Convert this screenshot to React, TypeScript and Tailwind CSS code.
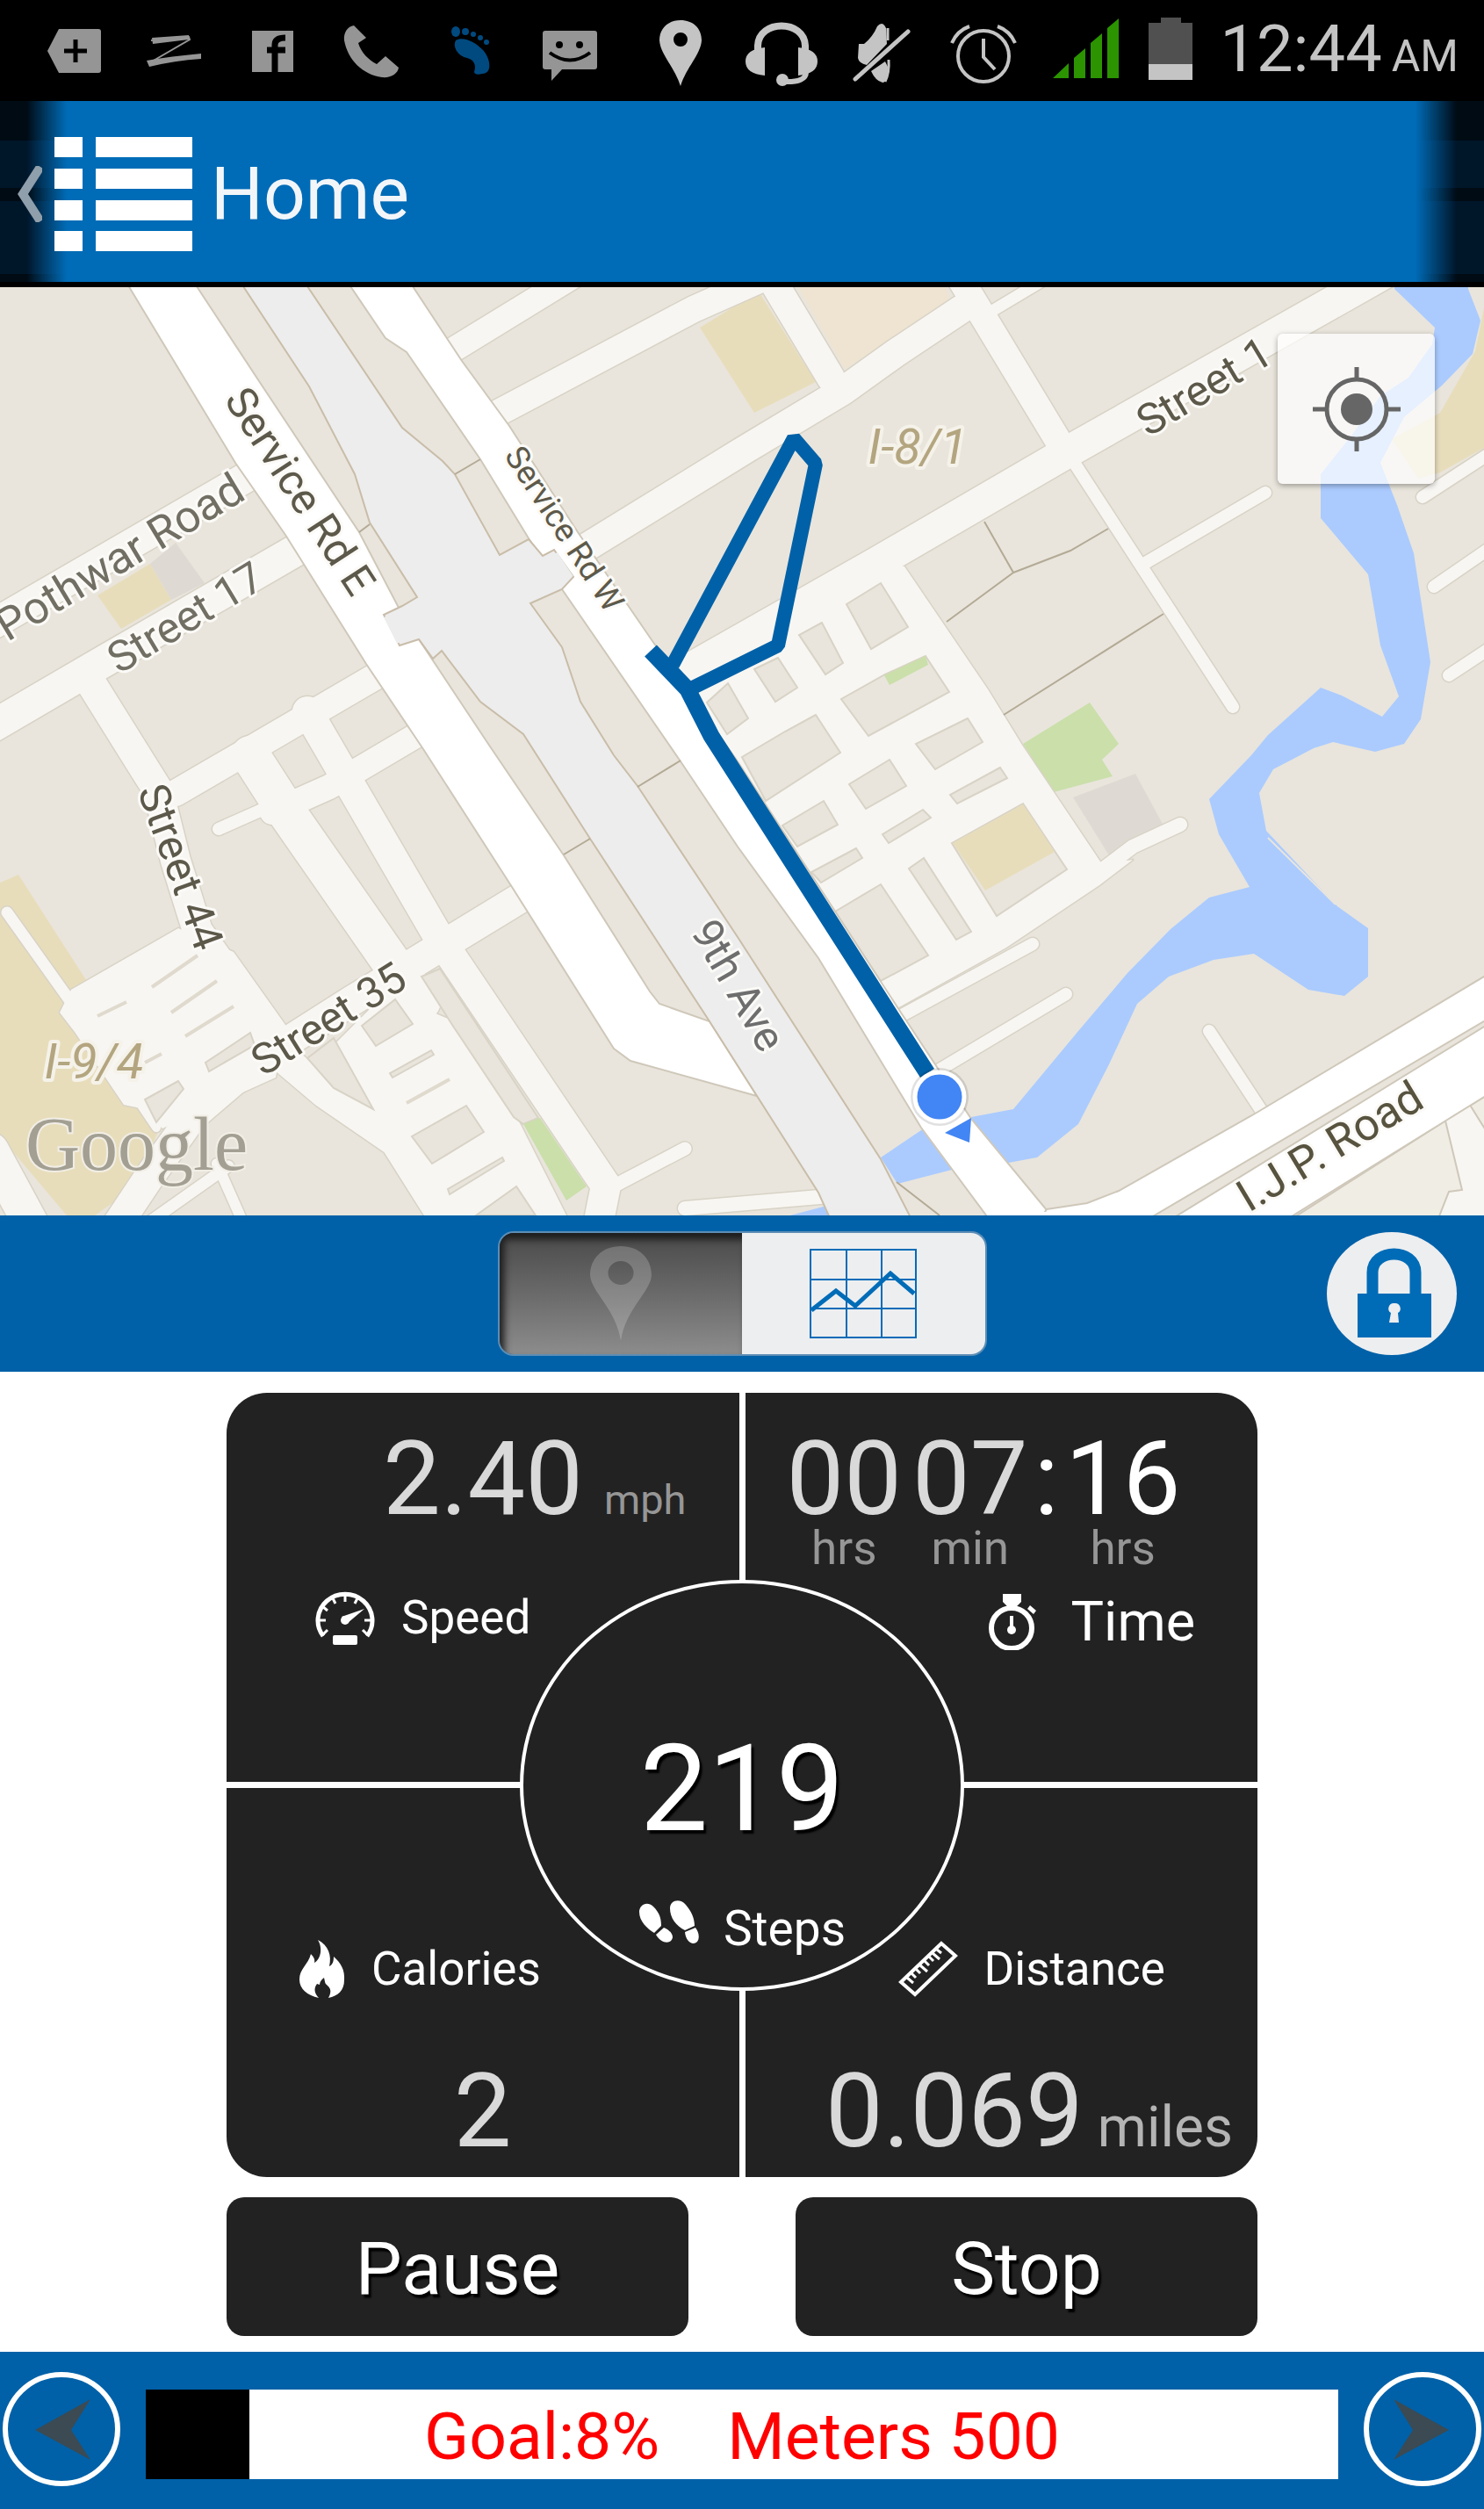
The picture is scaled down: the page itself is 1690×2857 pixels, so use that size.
/**
 * Workout home screen: live map with the walked route, the five stats
 * (speed / time / calories / distance / steps) and the goal bar.
 */

import { useState, type ReactNode } from "react";

/* ---------- map data (one canvas, 1690 x 1057, y starts at 327) ---------- */

type Road = { d: string; w: number };

const ROADS: Road[] = [
  // north
  { d: "M510,402 L660,310", w: 28 },
  { d: "M560,474 L790,352 L880,312", w: 30 },
  { d: "M660,628 L850,511 L960,445 L1020,402 L1095,352", w: 32 },
  { d: "M880,320 L946,430", w: 32 },
  { d: "M1092,315 L1210,510", w: 30 },
  { d: "M1120,360 L1190,318", w: 13 },
  { d: "M1585,306 L1215,515 L1000,640 L780,765", w: 36 },
  { d: "M1222,525 L1404,805", w: 14 },
  { d: "M1306,640 L1441,561", w: 14 },
  { d: "M1620,566 L1700,514", w: 14 },
  { d: "M1633,668 L1700,622", w: 14 },
  { d: "M1650,769 L1700,736", w: 14 },
  // south of the block grid
  { d: "M1245,998 L1290,964 L1344,939", w: 16 },
  { d: "M1020,1160 L1176,1075", w: 14 },
  { d: "M1070,1218 L1214,1132", w: 14 },
  { d: "M1377,1174 L1440,1270", w: 14 },
  // west
  { d: "M290,538 L-10,712", w: 34 },
  { d: "M345,622 L115,755 L-10,828", w: 36 },
  { d: "M105,780 L158,865 L180,900 L200,980 L225,1060 L260,1110 L305,1190 L370,1245 L450,1300 L510,1395", w: 34 },
  { d: "M605,1015 L400,1140 L290,1210 L220,1270 L170,1340 L130,1400", w: 34 },
  { d: "M435,766 L200,903", w: 30 },
  { d: "M480,834 L375,896 L310,925", w: 28 },
  { d: "M330,908 L249,944", w: 14 },
  { d: "M285,860 L330,930 L445,1095 L480,1140", w: 44 },
  { d: "M350,810 L500,1068 L690,1350 L680,1400", w: 34 },
  { d: "M700,1350 L780,1308", w: 15 },
  { d: "M8,1039 L80,1140", w: 13 },
  { d: "M-10,1310 L36,1395", w: 40 },
  { d: "M155,1250 L178,1284", w: 10 },
  { d: "M247,1325 L278,1395", w: 12 },
  { d: "M165,1395 L260,1328", w: 13 },
  { d: "M780,1376 L945,1362", w: 16 },
];

/** Dense quarters: filled with road colour, blocks are laid on top */
const QUARTERS = [
  "M770,765 L850,722 L1000,640 L1030,645 L1125,785 L1165,850 L1200,902 L1255,984 L1290,979 L1252,1008 L1146,1079 L1022,1148 L840,870 Z",
  "M440,1130 L510,1160 L591,1277 L645,1384 L485,1384 L434,1301 L380,1190 Z",
  "M203,1057 L81,1127 L68,1153 L85,1175 L141,1258 L160,1262 L185,1285 L314,1227 L325,1167 L266,1084 Z",
];

const BLOCKS = [
  "1003,664 964,688 992,739 1034,714",
  "936,709 910,723 940,768 960,755",
  "886,749 859,762 883,799 908,783",
  "1054,747 1008,768 958,796 989,838 1081,788",
  "829,778 852,818 828,836 805,800",
  "929,814 894,833 845,862 872,912 957,857",
  "1102,818 1043,847 1065,876 1119,845",
  "1013,865 967,893 986,921 1032,895",
  "1139,874 1082,905 1090,915 1147,886",
  "938,912 891,940 908,964 954,939",
  "1051,922 1005,950 1012,960 1060,931",
  "975,966 924,993 935,1005 982,977",
  "1165,915 1084,960 1135,1043 1215,990",
  "1052,977 1035,989 1089,1070 1106,1061",
  "1003,1007 951,1038 1003,1117 1057,1088",
  "412,1168 450,1138 470,1166 428,1191",
  "350,1205 380,1182 425,1263 380,1239",
  "491,1196 444,1222 447,1227 494,1201",
  "531,1259 469,1294 492,1325 551,1289",
  "572,1318 510,1354 512,1360 574,1322",
  "588,1351 542,1384 610,1384",
  "501,1103 480,1112 515,1167 585,1272 596,1280 613,1273",
  "285,1176 234,1210 238,1220 290,1190",
  "203,1231 165,1252 178,1278 209,1240",
];

const SAND = [
  "797,373 864,332 929,435 859,470",
  "1690,350 1680,400 1640,470 1585,500 1615,545 1640,538 1690,510",
  "171,642 195,683 138,716 111,678",
  "0,1005 21,996 100,1119 190,1240 190,1263 176,1298 152,1353 108,1384 76,1384 0,1294",
];

const SLITS = [
  "M173,1124 L225,1088",
  "M111,1157 L144,1141",
  "M211,1180 L266,1146",
  "M195,1153 L247,1117",
  "M165,1210 L184,1200",
  "M512,1229 L463,1256",
];

const FOOTPATHS =
  "M1121,594 L1154,652 L1078,708 M1154,652 L1219,627 L1262,602 M1325,699 L1143,814 M518,540 L547,523 M409,606 L421,597 M726,896 L775,866 M642,973 L672,955 M1021,1346 L1070,1384";

const RIVER =
  "M1588,320 L1588,329 L1634,373 L1631,392 L1604,430 L1572,451 L1539,496 L1504,540 L1504,590 L1558,654 L1572,735 L1593,793 L1574,816 L1528,792 L1504,783 L1444,837 L1425,860 L1377,910 L1388,950 L1423,1010 L1377,1022 L1333,1058 L1284,1108 L1228,1174 L1154,1263 L1106,1272 L1049,1287 L1003,1318 L1022,1348 L1084,1332 L1143,1325 L1181,1318 L1228,1280 L1263,1212 L1295,1143 L1331,1112 L1382,1093 L1428,1086 L1490,1127 L1531,1134 L1558,1112 L1558,1057 L1523,1032 L1442,946 L1434,903 L1450,876 L1496,852 L1518,845 L1566,856 L1599,847 L1618,819 L1629,754 L1610,630 L1591,575 L1572,527 L1599,475 L1642,439 L1677,403 L1686,365 L1672,329 L1672,320 Z";

const SERVICE_E =
  "M143,320 L268,527 L325,609 L417,756 L482,853 L583,1010 L699,1194 L718,1208 L862,1248 L808,1163 L751,1143 L740,1129 L642,974 L558,850 L477,728 L453,690 L409,606 L295,434 L220,320 Z";
const SERVICE_W =
  "M395,320 L439,385 L463,401 L547,523 L602,613 L640,671 L775,867 L840,964 L932,1091 L1049,1284 L1135,1400 L1230,1400 L1192,1378 L1106,1274 L1024,1150 L840,867 L743,730 L658,606 L580,485 L526,411 L466,320 Z";
const NINTH_AVE =
  "M273,320 L352,440 L404,540 L421,595 L475,680 L458,690 L437,700 L455,735 L477,728 L493,750 L503,741 L547,799 L596,836 L672,955 L808,1163 L932,1358 L951,1400 L1044,1400 L1003,1320 L840,1067 L726,895 L699,860 L661,799 L640,737 L604,687 L640,671 L653,657 L631,626 L618,633 L602,614 L569,632 L518,540 L504,525 L458,487 L346,320 Z";

const LABELS = [
  { t: "Service Rd E", x: 342, y: 559, r: 57, s: 49 },
  { t: "Service Rd W", x: 643, y: 602, r: 57, s: 37 },
  { t: "Pothwar Road", x: 136, y: 634, r: -31, s: 51, c: "#716e63" },
  { t: "Street 17", x: 211, y: 703, r: -31, s: 49, c: "#716e63" },
  { t: "Street 44", x: 206, y: 987, r: 70, s: 49 },
  { t: "Street 35", x: 374, y: 1160, r: -32, s: 49 },
  { t: "9th Ave", x: 841, y: 1122, r: 60, s: 49, c: "#6e6e6e" },
  { t: "I.J.P. Road", x: 1514, y: 1305, r: -31, s: 51, c: "#57533f" },
  { t: "Street 1", x: 1371, y: 440, r: -31, s: 49 },
];

function RouteMap() {
  return (
    <svg viewBox="0 327 1690 1057" className="block w-full" role="img" aria-label="Route map">
      <rect y="320" width="1690" height="1070" fill="#e9e5dc" />
      <polygon points="905,320 1075,320 1081,342 1008,394 962,420" fill="#efe4d2" />
      {SAND.map((p) => (
        <polygon key={p} points={p} fill="#e8ddbb" />
      ))}
      <polygon points="200,618 233,664 195,683 171,642" fill="#dedad3" />
      <polygon points="1293,881 1222,908 1263,974 1325,940" fill="#dedad3" />
      <polygon points="1241,800 1274,847 1255,865 1267,884 1200,902 1165,847" fill="#cadfaa" />
      <path d={RIVER} fill="#abcbff" />
      <path d="M1444,954 L1521,1030" stroke="#e9e5dc" strokeWidth="2" />
      <polygon points="900,1384 945,1372 955,1384" fill="#abcbff" />

      {/* minor roads: casing first, fill second, so junctions stay open */}
      <g fill="none" stroke="#d8d3c6" strokeLinecap="round" strokeLinejoin="round">
        {ROADS.map((r) => (
          <path key={r.d} d={r.d} strokeWidth={r.w + 3} />
        ))}
        {QUARTERS.map((d) => (
          <path key={d} d={d} strokeWidth="3" />
        ))}
      </g>
      {QUARTERS.map((d) => (
        <path key={d} d={d} fill="#f8f6f2" />
      ))}
      <g fill="none" stroke="#f8f6f2" strokeLinecap="round" strokeLinejoin="round">
        {ROADS.map((r) => (
          <path key={r.d} d={r.d} strokeWidth={r.w} />
        ))}
      </g>
      {BLOCKS.map((p) => (
        <polygon key={p} points={p} fill="#e9e5dc" stroke="#d8d3c6" strokeWidth="2" />
      ))}
      <polygon points="1165,916 1085,960 1122,1014 1201,970" fill="#e8ddbb" />
      <polygon points="1054,747 1057,757 1013,780 1007,769" fill="#cadfaa" />
      <polygon points="615,1273 668,1351 645,1367 596,1280" fill="#cadfaa" />
      <g stroke="#dfdacd" strokeWidth="4">
        {SLITS.map((d) => (
          <path key={d} d={d} />
        ))}
      </g>

      {/* main roads */}
      <g stroke="#cfc8ba" strokeWidth="2">
        <path d="M1460,1395 L1645,1277 L1700,1243 L1700,1395 Z" fill="#f0ede5" />
        <path d="M1645,1272 L1665,1355 L1650,1357 L1635,1395 L1700,1395 L1700,1300 L1672,1255 Z" fill="#f8f6f2" />
        <path d={SERVICE_E} fill="#fff" />
        <path d={SERVICE_W} fill="#fff" />
        <path d="M1180,1395 L1192,1377 L1238,1370 L1274,1356 L1431,1267 L1700,1106 L1700,1157 L1296,1395 Z" fill="#fff" />
        <path d="M1323,1395 L1700,1163 L1700,1243 L1645,1277 L1455,1395 Z" fill="#fff" />
        <path d={NINTH_AVE} fill="#ededed" stroke="#c9bda9" />
      </g>
      {/* open joints: cross street over 9th Ave, Service Rd W into I.J.P. Road */}
      <path d="M439,702 L454,732 M633,630 L651,657" stroke="#ededed" strokeWidth="4" />
      <path d="M1140,1382 L1192,1383 L1300,1382" stroke="#fff" strokeWidth="6" />
      <path d={FOOTPATHS} fill="none" stroke="#b3aa96" strokeWidth="2" />

      {/* place names and street names */}
      <g fontFamily="Roboto, sans-serif" strokeLinejoin="round">
        {LABELS.map((l) => (
          <text
            key={l.t}
            x={l.x}
            y={l.y}
            dy="0.35em"
            textAnchor="middle"
            fontSize={l.s}
            fill={l.c ?? "#5d594a"}
            stroke="#fbfaf7"
            strokeWidth="6"
            transform={`rotate(${l.r} ${l.x} ${l.y})`}
            className="[paint-order:stroke]"
          >
            {l.t}
          </text>
        ))}
        <g fontSize="56" fontStyle="italic" textAnchor="middle" fill="#b3a57f" stroke="#f5f2ea" strokeWidth="8">
          <text x="1045" y="528" className="[paint-order:stroke]">I-8/1</text>
          <text x="107" y="1228" className="[paint-order:stroke]">I-9/4</text>
        </g>
      </g>
      <text
        x="29"
        y="1332"
        fontFamily="Liberation Serif, serif"
        fontSize="86"
        fill="#a39f93"
        stroke="#f1eee6"
        strokeWidth="4"
        className="[paint-order:stroke]"
      >
        Google
      </text>

      {/* walked route */}
      <g fill="none" stroke="#0061a8" strokeLinejoin="bevel">
        <path d="M766,757 L904,499 L929,528 L886,735 L785,785" strokeWidth="16" />
        <path d="M741,741 L783,785 L810,838 L1056,1222" strokeWidth="19" />
      </g>
      <circle cx="1070" cy="1249" r="33" fill="#000" opacity="0.12" />
      <circle cx="1070" cy="1249" r="28" fill="#4285f4" stroke="#fff" strokeWidth="5" />
      <path d="M1076,1290 L1106,1273 L1104,1301 Z" fill="#4285f4" />
    </svg>
  );
}

/* ---------- status bar ---------- */

function StatusIcon({ wide = false, children }: { wide?: boolean; children: ReactNode }) {
  return wide ? (
    <svg viewBox="0 0 84 80" className="h-20 w-[84px] shrink-0" aria-hidden="true">{children}</svg>
  ) : (
    <svg viewBox="0 0 64 80" className="h-20 w-16 shrink-0" aria-hidden="true">{children}</svg>
  );
}

function StatusBar() {
  return (
    <div className="flex h-[115px] items-center bg-black pt-1 pr-[29px] pl-[52px] text-[#c4c4c4]">
      <div className="flex gap-[49px] text-[#959595]">
        <StatusIcon>
          <path d="M15,13 H60 Q63,13 63,16 V60 Q63,63 60,63 H15 L2,38 Z" fill="currentColor" />
          <path d="M34,25 V51 M21,38 H47" stroke="#000" strokeWidth="5" />
        </StatusIcon>
        <StatusIcon>
          <path d="M7,26 L50,22 L51,25 L8,50" fill="none" stroke="currentColor" strokeWidth="2" />
          <path d="M8,23 L50,20 V25 L9,30 Z M2,49 Q30,44 64,41 V47 Q34,49 5,56 Z" fill="currentColor" />
        </StatusIcon>
        <StatusIcon>
          <path d="M9,15 H56 V62 H9 Z" fill="currentColor" />
          <path d="M35,62 V31 Q35,23 47,23 M26,37 H47" fill="none" stroke="#000" strokeWidth="7" />
        </StatusIcon>
        <StatusIcon>
          <path
            d="M12,9 C5,10 0,17 1,26 C5,48 22,65 44,68 C54,69 62,64 63,57 L48,44 L38,53 C28,48 20,39 17,29 L26,23 Z"
            fill="currentColor"
          />
        </StatusIcon>
        <StatusIcon>
          <g fill="#004a80">
            <path d="M15,26 C24,21 37,28 46,37 C55,47 57,64 45,64 Q37,66 36,62 C39,53 35,48 28,46 C18,44 11,34 15,26 Z" />
            <ellipse cx="15" cy="16" rx="5" ry="6" />
            <circle cx="26" cy="16" r="4" />
            <circle cx="35" cy="19" r="3" />
            <circle cx="43" cy="23" r="3" />
            <circle cx="50" cy="28" r="3" />
          </g>
        </StatusIcon>
        <StatusIcon>
          <path d="M4,15 H60 Q63,15 63,18 V56 Q63,59 60,59 H23 L11,72 V59 H4 Q1,59 1,56 V18 Q1,15 4,15 Z" fill="currentColor" />
          <circle cx="20" cy="31" r="4" fill="#000" />
          <circle cx="43" cy="31" r="4" fill="#000" />
          <path d="M9,40 Q32,57 55,40" fill="none" stroke="#000" strokeWidth="4" />
        </StatusIcon>
      </div>

      <div className="ml-auto flex items-center gap-[31px]">
        <StatusIcon wide>
          <path
            d="M42,3 C28,3 18,12 18,26 C19,42 35,56 42,78 C49,56 65,42 66,26 C66,12 56,3 42,3 Z M42,17 A8,8 0 1 1 42,33 A8,8 0 1 1 42,17 Z"
            fill="currentColor"
            fillRule="evenodd"
          />
        </StatusIcon>
        <StatusIcon wide>
          <path d="M15,38 V32 C16,2 68,2 69,32 V38" fill="none" stroke="currentColor" strokeWidth="8" />
          <path d="M23,34 V66 Q1,64 1,50 Q1,36 23,34 Z M61,34 V66 Q83,64 83,50 Q83,36 61,34 Z" fill="currentColor" />
          <path d="M70,62 Q70,74 45,73" fill="none" stroke="currentColor" strokeWidth="6" />
          <circle cx="43" cy="71" r="7" fill="currentColor" />
        </StatusIcon>
        <StatusIcon wide>
          <path d="M15,30 H21 Q31,22 36,10 Q42,3 46,12 L47,30 L24,54 Q15,52 14,46 Z M45,50 L48,56 Q48,74 42,74 Q34,72 29,61 Z" fill="currentColor" />
          <path d="M48,12 V26 M49,48 Q50,62 45,73" fill="none" stroke="currentColor" strokeWidth="3" />
          <path d="M11,70 L71,16" stroke="currentColor" strokeWidth="5" strokeLinecap="round" />
        </StatusIcon>
        <StatusIcon wide>
          <g fill="none" stroke="currentColor" strokeWidth="4">
            <circle cx="42" cy="44" r="29" />
            <path d="M42,24 V45 L55,59 M6,29 Q12,15 26,10 M78,29 Q72,15 58,10" />
          </g>
        </StatusIcon>
        <StatusIcon wide>
          <path d="M6,69 L24,52 V69 Z M30,46 L43,35 V69 H30 Z M49,29 L62,18 V69 H49 Z M68,12 L81,1 V69 H68 Z" fill="#2b9400" />
        </StatusIcon>
        <svg viewBox="0 0 50 80" className="h-20 w-[50px] shrink-0" aria-hidden="true">
          <path d="M14,0 H37 V6 H50 V54 H0 V6 H14 Z" fill="#505050" />
          <path d="M0,53 H50 V71 H0 Z" fill="currentColor" />
        </svg>
        <time className="flex items-baseline gap-[11px] text-[74px] leading-[80px]">
          12:44 <span className="text-[50px]">AM</span>
        </time>
      </div>
    </div>
  );
}

/* ---------- header ---------- */

/** Dark bands that show through where the bar fades out */
function EdgeFade({ side }: { side: "left" | "right" }) {
  return (
    <div
      className={
        side === "left"
          ? "absolute inset-y-0 left-0 w-[76px] [mask-image:linear-gradient(to_right,#000_40%,transparent)]"
          : "absolute inset-y-0 right-0 w-[78px] [mask-image:linear-gradient(to_left,#000_40%,transparent)]"
      }
    >
      <div className="h-full bg-[linear-gradient(#000b14_0_45px,#001629_45px_99px,#000b14_99px_114px,#001629_114px_197px,#000b14_197px)]" />
    </div>
  );
}

function Header() {
  return (
    <header className="relative flex h-[212px] items-center border-b-6 border-black bg-[#006cb7] pt-1.5 pl-4">
      <EdgeFade side="left" />
      <EdgeFade side="right" />
      <button type="button" aria-label="Menu" className="relative flex items-center gap-[14px]">
        <svg viewBox="0 0 32 64" className="h-16 w-8" fill="none" stroke="#8f9fab" strokeWidth="10" aria-hidden="true">
          <path d="M30,1 L10,32 L30,63" />
        </svg>
        <svg viewBox="0 0 157 130" className="h-[130px] w-[157px]" fill="#fff" aria-hidden="true">
          <path d="M0,0 h32 v23 h-32 z M47,0 h110 v23 h-110 z M0,36 h32 v23 h-32 z M47,36 h110 v23 h-110 z M0,72 h32 v23 h-32 z M47,72 h110 v23 h-110 z M0,107 h32 v23 h-32 z M47,107 h110 v23 h-110 z" />
        </svg>
      </button>
      <h1 className="relative ml-[21px] text-[84px] leading-[96px] text-[#f3f6f9]">Home</h1>
    </header>
  );
}

/* ---------- view switch ---------- */

function ViewBar() {
  const [view, setView] = useState<"map" | "chart">("map");

  return (
    <div className="grid h-[178px] grid-cols-[1fr_auto_1fr] items-center bg-[#0061a8]">
      <div />
      <div className="flex h-[142px] w-[557px] overflow-hidden rounded-[18px] border-2 border-[#5d8db5]">
        <button
          type="button"
          aria-label="Map view"
          aria-pressed={view === "map"}
          onClick={() => setView("map")}
          className="flex flex-1 items-center justify-center bg-linear-to-b from-[#4a4a4a] to-[#8c8c8c] shadow-[inset_5px_7px_8px_#1b1b1b]"
        >
          <svg viewBox="0 0 70 108" className="h-[108px] w-[70px]" aria-hidden="true">
            <path
              d="M35,0 C14,0 0,14 0,33 C1,52 30,72 35,108 C40,72 69,52 70,33 C70,14 56,0 35,0 Z M35,17 A14,13 0 1 1 35,44 A14,13 0 1 1 35,17 Z"
              fill="#fff"
              fillOpacity="0.2"
              fillRule="evenodd"
            />
          </svg>
        </button>
        <button
          type="button"
          aria-label="Chart view"
          aria-pressed={view === "chart"}
          onClick={() => setView("chart")}
          className="flex flex-1 items-center justify-center bg-[#edeef0]"
        >
          <svg viewBox="0 0 122 102" className="h-[102px] w-[122px]" fill="none" stroke="#006cb7" aria-hidden="true">
            <path d="M1,1 H121 V101 H1 Z M42,1 V101 M82,1 V101 M1,35 H121 M1,68 H121" strokeWidth="2" />
            <path d="M2,70 L30,48 L52,65 L92,28 L119,51" strokeWidth="5" />
          </svg>
        </button>
      </div>
      <button type="button" aria-label="Lock screen" className="mr-[30px] justify-self-end">
        <svg viewBox="0 0 149 140" className="h-[140px] w-[149px]" aria-hidden="true">
          <ellipse cx="74" cy="70" rx="74" ry="70" fill="#edeef0" />
          <path d="M52,74 V46 C52,18 101,18 101,46 V74" fill="none" stroke="#006cb7" strokeWidth="13" />
          <path d="M35,70 H119 V120 H35 Z" fill="#006cb7" />
          <path d="M77,81 a6,6 0 0 1 4,11 L82,103 H71 L73,92 a6,6 0 0 1 4,-11 Z" fill="#edeef0" />
        </svg>
      </button>
    </div>
  );
}

/* ---------- stats ---------- */

function SpeedIcon() {
  return (
    <svg viewBox="0 0 68 64" className="h-16 w-[68px]" fill="none" stroke="#fff" aria-hidden="true">
      <path d="M9,53 A31,30 0 1 1 59,53" strokeWidth="5" />
      <path d="M34,4 V14 M19,8 L23,16 M49,8 L45,16 M8,19 L14,24 M3,35 H12 M65,35 H56 M8,52 L14,46 M60,52 L54,46" strokeWidth="3" />
      <path d="M30,31 L56,22 L37,38 Z" fill="#fff" stroke="none" />
      <circle cx="34" cy="35" r="5" fill="#fff" stroke="none" />
      <rect x="20" y="52" width="28" height="11" rx="2" fill="#fff" stroke="none" />
    </svg>
  );
}

function StopwatchIcon() {
  return (
    <svg viewBox="0 0 54 64" className="h-16 w-[54px]" fill="none" stroke="#fff" aria-hidden="true">
      <circle cx="26" cy="39" r="23" strokeWidth="6" />
      <path d="M16,0 H37 V9 L32,14 H21 L16,9 Z M44,17 L47,13 L54,19 L51,23 Z" fill="#fff" stroke="none" />
      <path d="M26,25 V40" strokeWidth="4" />
      <circle cx="26" cy="41" r="5" fill="#fff" stroke="none" />
    </svg>
  );
}

function FlameIcon() {
  return (
    <svg viewBox="0 0 52 66" className="h-[66px] w-[52px]" fill="#fff" aria-hidden="true">
      <path d="M21,0 C33,6 37,18 34,30 C38,28 39,24 39,19 C47,26 52,34 51,46 C51,57 44,64 33,66 C38,57 34,54 31,51 C29,50 29,47 28,43 C25,45 23,48 23,51 L20,50 C16,55 17,61 22,66 C9,63 0,56 0,45 C0,33 10,28 13,16 C16,19 18,22 17,26 C24,22 27,10 21,0 Z" />
    </svg>
  );
}

function RulerIcon() {
  return (
    <svg viewBox="0 0 68 64" className="h-16 w-[68px]" fill="none" stroke="#fff" aria-hidden="true">
      <path d="M49,3 L65,17 L19,61 L3,47 Z" strokeWidth="4" />
      <path d="M10,42 L17,48 M15,37 L20,42 M20,32 L25,37 M25,28 L33,35 M30,23 L35,28 M35,18 L40,23 M39,14 L47,21 M44,10 L49,14" strokeWidth="3" />
    </svg>
  );
}

function StepsIcon() {
  return (
    <svg viewBox="0 0 69 50" className="h-[50px] w-[69px]" fill="#fff" aria-hidden="true">
      <path d="M1,13 C1,5 10,0 17,7 C24,14 26,20 26,29 L18,37 C10,32 1,24 1,13 Z M20,39 L29,31 C34,33 39,37 39,42 C38,50 26,50 20,39 Z" />
      <path d="M36,9 C36,0 47,-3 54,5 C60,12 64,20 64,29 L53,34 C43,29 36,20 36,9 Z M53,36 L65,31 C69,36 70,43 67,47 C62,52 54,47 53,36 Z" />
    </svg>
  );
}

function StatLabel({ icon, children }: { icon: ReactNode; children: ReactNode }) {
  return (
    <div className="flex h-16 items-center gap-[30px] text-[53px] leading-[64px] text-white">
      {icon}
      <span>{children}</span>
    </div>
  );
}

function TimePart({ value, unit }: { value: string; unit: string }) {
  return (
    <div className="text-center">
      <div>{value}</div>
      <div className="text-[53px] leading-[48px] text-[#969696]">{unit}</div>
    </div>
  );
}

function Stats() {
  return (
    <section
      aria-label="Workout stats"
      className="relative grid grid-cols-2 grid-rows-[443px_443px] gap-[7px] overflow-hidden rounded-[46px] text-[117px] leading-[110px] text-[#d9d9d9]"
    >
      <div className="bg-[#222] pt-[43px]">
        <div className="flex items-baseline justify-end gap-6 pr-[60px]">
          2.40 <span className="text-[47px] leading-[48px] text-[#969696]">mph</span>
        </div>
        <div className="mt-[71px] pl-[101px]">
          <StatLabel icon={<SpeedIcon />}>Speed</StatLabel>
        </div>
      </div>

      <div className="bg-[#222] pt-[43px]">
        <div className="flex pl-[47px]">
          <TimePart value="00" unit="hrs" />
          <div className="ml-3">
            <TimePart value="07" unit="min" />
          </div>
          <span className="mx-[7px] text-white">:</span>
          <div className="text-white">
            <TimePart value="16" unit="hrs" />
          </div>
        </div>
        <div className="mt-7 flex items-center gap-10 pl-[277px] text-[63px] leading-[64px] text-white">
          <StopwatchIcon />
          <span>Time</span>
        </div>
      </div>

      <div className="flex flex-col justify-end gap-[75px] bg-[#222] pb-5">
        <div className="flex pl-[83px]">
          <StatLabel icon={<FlameIcon />}>Calories</StatLabel>
        </div>
        <div className="text-center">2</div>
      </div>

      <div className="flex flex-col justify-end gap-[75px] bg-[#222] pb-5">
        <div className="flex pl-[174px]">
          <StatLabel icon={<RulerIcon />}>Distance</StatLabel>
        </div>
        <div className="flex items-baseline justify-end gap-4 pr-7">
          0.069 <span className="text-[64px] leading-[64px] text-[#b4b4b4]">miles</span>
        </div>
      </div>

      {/* steps dial sits over the crossing of the four cells */}
      <div className="absolute top-1/2 left-1/2 flex h-[468px] w-[506px] -translate-x-1/2 -translate-y-1/2 flex-col items-center rounded-[50%] border-4 border-white bg-[#222] pt-[166px] text-white">
        <div className="text-[138px] leading-[136px] [text-shadow:3px_4px_2px_#000]">219</div>
        <div className="mt-[59px] flex items-start gap-7 text-[55px] leading-[64px]">
          <StepsIcon />
          <span>Steps</span>
        </div>
      </div>
    </section>
  );
}

function ActionButton({ children }: { children: ReactNode }) {
  return (
    <button
      type="button"
      className="h-[158px] rounded-[20px] bg-[#222] pt-1.5 text-[84px] leading-[96px] text-white [text-shadow:3px_4px_2px_#000]"
    >
      {children}
    </button>
  );
}

/* ---------- goal bar ---------- */

function ArrowButton({ label, flip = false }: { label: string; flip?: boolean }) {
  return (
    <button type="button" aria-label={label} className="shrink-0">
      <svg viewBox="0 0 134 130" className="h-[130px] w-[134px]" aria-hidden="true">
        <ellipse cx="67" cy="65" rx="64" ry="62" fill="none" stroke="#fff" strokeWidth="6" />
        <path d={flip ? "M97,66 L34,31 L56,66 L34,100 Z" : "M37,66 L100,31 L78,66 L100,100 Z"} fill="#3b4a53" />
      </svg>
    </button>
  );
}

function GoalBar({ percent, meters }: { percent: number; meters: number }) {
  return (
    <footer className="flex h-[179px] items-center gap-[29px] bg-[#0061a8] px-[3px] pb-1">
      <ArrowButton label="Previous goal" />
      <div className="relative mt-3 flex h-[102px] flex-1 items-center justify-center gap-[77px] bg-white pt-1 text-[75px] leading-[98px] text-[#f00]">
        <div className="absolute inset-y-0 left-0 bg-black" style={{ width: `${percent + 0.7}%` }} />
        <span>Goal:{percent}%</span>
        <span>Meters {meters}</span>
      </div>
      <ArrowButton label="Next goal" flip />
    </footer>
  );
}

export default function App() {
  return (
    <div className="bg-white font-[Roboto,sans-serif]">
      <StatusBar />
      <Header />
      <div className="relative">
        <RouteMap />
        <button
          type="button"
          aria-label="My location"
          className="absolute top-[53px] right-14 flex h-[171px] w-[179px] items-center justify-center rounded-md bg-white/70 shadow-[0_2px_6px_rgba(0,0,0,0.35)]"
        >
          <svg viewBox="0 0 100 100" className="h-[100px] w-[100px]" fill="none" stroke="#666" strokeWidth="5" aria-hidden="true">
            <circle cx="50" cy="50" r="34" />
            <path d="M50,2 V16 M50,84 V98 M0,50 H16 M84,50 H100" />
            <circle cx="50" cy="50" r="18" fill="#666" stroke="none" />
          </svg>
        </button>
      </div>
      <ViewBar />
      <main className="px-[258px] pt-6 pb-[18px]">
        <Stats />
        <div className="mt-[23px] grid grid-cols-2 gap-x-[122px]">
          <ActionButton>Pause</ActionButton>
          <ActionButton>Stop</ActionButton>
        </div>
      </main>
      <GoalBar percent={8} meters={500} />
    </div>
  );
}
